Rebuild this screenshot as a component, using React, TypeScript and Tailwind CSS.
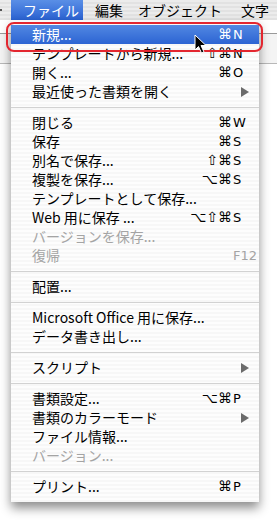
type Item = {
  label: string;
  mods?: string;
  keyName?: string;
  submenu?: boolean;
  disabled?: boolean;
  active?: boolean;
};

type Entry = Item | 'sep';

const entries: Entry[] = [
  { label: '新規...', mods: '⌘', keyName: 'N', active: true },
  { label: 'テンプレートから新規...', mods: '⇧⌘', keyName: 'N' },
  { label: '開く...', mods: '⌘', keyName: 'O' },
  { label: '最近使った書類を開く', submenu: true },
  'sep',
  { label: '閉じる', mods: '⌘', keyName: 'W' },
  { label: '保存', mods: '⌘', keyName: 'S' },
  { label: '別名で保存...', mods: '⇧⌘', keyName: 'S' },
  { label: '複製を保存...', mods: '⌥⌘', keyName: 'S' },
  { label: 'テンプレートとして保存...' },
  { label: 'Web 用に保存 ...', mods: '⌥⇧⌘', keyName: 'S' },
  { label: 'バージョンを保存...', disabled: true },
  { label: '復帰', keyName: 'F12', disabled: true },
  'sep',
  { label: '配置...' },
  'sep',
  { label: 'Microsoft Office 用に保存...' },
  { label: 'データ書き出し...' },
  'sep',
  { label: 'スクリプト', submenu: true },
  'sep',
  { label: '書類設定...', mods: '⌥⌘', keyName: 'P' },
  { label: '書類のカラーモード', submenu: true },
  { label: 'ファイル情報...' },
  { label: 'バージョン...', disabled: true },
  'sep',
  { label: 'プリント...', mods: '⌘', keyName: 'P' },
];

function MenuRow({ item }: { item: Item }) {
  const color = item.active
    ? 'text-white bg-[linear-gradient(#5288e2,#2c64d3)]'
    : item.disabled
      ? 'text-[#a4a4a4]'
      : 'text-black';
  return (
    <div className={`flex h-[19px] items-center pl-[21px] leading-[19px] ${color}`}>
      <span className="flex-1 whitespace-nowrap text-[14px]">{item.label}</span>
      <span className="whitespace-nowrap pr-[1px] font-['DejaVu_Sans'] text-[14px]">{item.mods}</span>
      <span className="w-[26px] whitespace-nowrap font-['DejaVu_Sans'] text-[13px]">
        {item.submenu ? (
          <svg width="8" height="10" viewBox="0 0 8 10" className="ml-[8px]">
            <path d="M0 0 L8 5 L0 10 Z" fill={item.active ? '#fff' : '#6b6b6b'} />
          </svg>
        ) : (
          item.keyName
        )}
      </span>
    </div>
  );
}

export default function App() {
  return (
    <div className="relative h-[521px] w-[277px] overflow-hidden bg-white font-['Noto_Sans_CJK_JP','Noto_Sans',sans-serif]">
      {/* menu bar */}
      <div className="flex h-[20px] items-center bg-[repeating-linear-gradient(#ececec_0px,#ececec_2px,#e2e2e2_2px,#e2e2e2_4px)] text-[14px] text-black">
        <div className="flex w-[11px] items-center">
          <span className="h-[2px] w-[2px] bg-[#555]"></span>
        </div>
        <div className="flex h-[20px] w-[72px] items-center bg-[linear-gradient(#5a8fe6,#2a62d2)] pl-[12px] text-white">
          ファイル
        </div>
        <span className="ml-[12px]">編集</span>
        <span className="ml-[15px]">オブジェクト</span>
        <span className="ml-[19px]">文字</span>
      </div>

      {/* window behind */}
      <div className="flex flex-col">
        <div className="h-[13px]"></div>
        <div className="h-[1px] bg-[#9a9a9a]"></div>
        <div className="h-[29px] bg-[#f4f4f4]"></div>
        <div className="h-[1px] bg-[#b8b8b8]"></div>
      </div>

      {/* dropdown menu */}
      <div className="absolute left-[11px] top-[20px] w-[248px] bg-[repeating-linear-gradient(#f7f7f7_0px,#f7f7f7_2px,#fdfdfd_2px,#fdfdfd_4px)] pb-[6px] pt-[5px] shadow-[0_6px_10px_rgba(0,0,0,0.45)]">
        {entries.map((e, i) =>
          e === 'sep' ? (
            <div key={i} className="flex h-[12px] items-center">
              <div className="h-[1px] w-full bg-[#d2d2d2]"></div>
            </div>
          ) : (
            <MenuRow key={i} item={e} />
          ),
        )}
      </div>

      {/* annotation ring */}
      <div className="absolute left-[6px] top-[22px] h-[30px] w-[257px] rounded-[8px] border-2 border-[#e3262f]"></div>

      {/* mouse cursor */}
      <svg className="absolute left-[194px] top-[34px]" width="14" height="22" viewBox="0 0 14 22">
        <path
          d="M1 1 L1 16 L4.5 12.5 L7.5 19 L10 18 L7 11.5 L12 11.5 Z"
          fill="#000"
          stroke="#fff"
          strokeWidth="1"
          strokeLinejoin="round"
        />
      </svg>
    </div>
  );
}
